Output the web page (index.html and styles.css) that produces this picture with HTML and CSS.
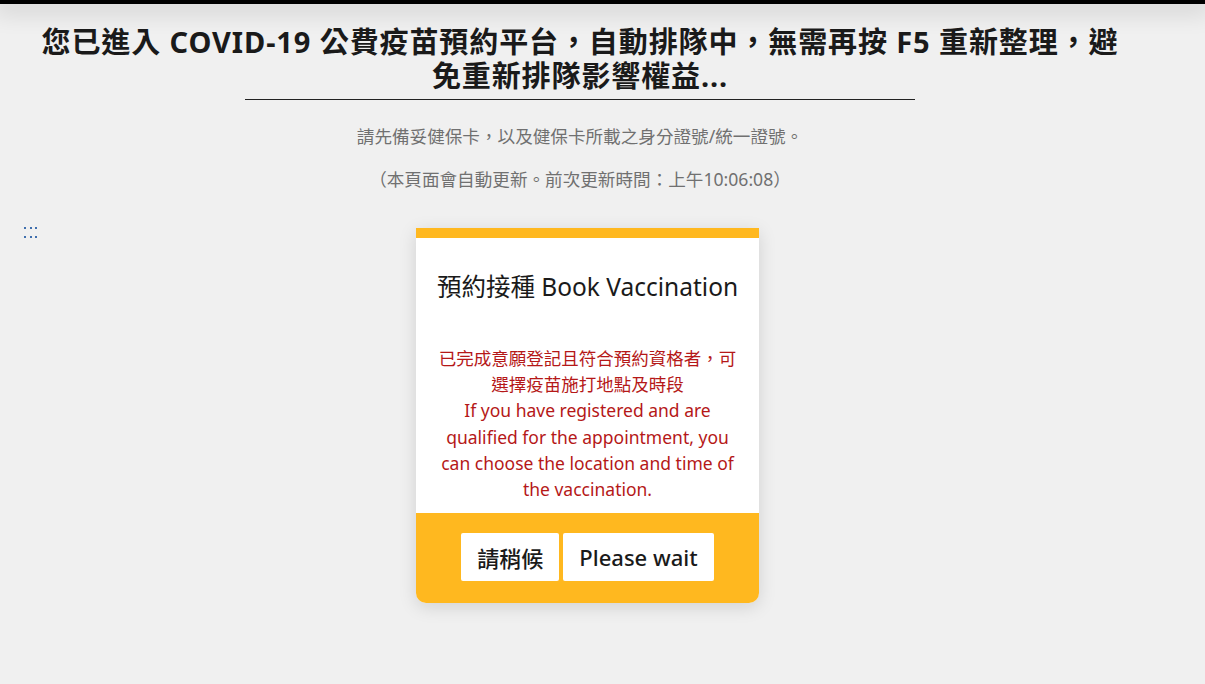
FILE: index.html
```html
<!DOCTYPE html>
<html lang="zh-Hant">
<head>
<meta charset="utf-8">
<title>COVID-19 公費疫苗預約平台</title>
<link rel="stylesheet" href="styles.css">
</head>
<body>
<div class="topbar"></div>
<main class="page">
  <header class="intro">
    <h1 class="headline">您已進入 COVID-19 公費疫苗預約平台，自動排隊中，無需再按 F5 重新整理，避<br>免重新排隊影響權益...</h1>
    <hr class="rule">
    <p class="note">請先備妥健保卡，以及健保卡所載之身分證號/統一證號。</p>
    <p class="note">（本頁面會自動更新。前次更新時間：上午10:06:08）</p>
  </header>
  <section class="stage">
    <div class="dots"><i></i><i></i><i></i><i></i><i></i><i></i></div>
    <div class="card">
      <div class="card-body">
        <h2 class="card-title">預約接種 Book Vaccination</h2>
        <p class="card-text">已完成意願登記且符合預約資格者，可選擇疫苗施打地點及時段<br>If you have registered and are qualified for the appointment, you can choose the location and time of the vaccination.</p>
      </div>
      <div class="card-foot">
        <button class="btn">請稍候</button>
        <button class="btn">Please wait</button>
      </div>
    </div>
  </section>
</main>
</body>
</html>
```
FILE: styles.css
```css
html, body {
  margin: 0;
  padding: 0;
}
body {
  background: #f0f0f0;
  font-family: "Noto Sans", "Noto Sans CJK TC", sans-serif;
  color: #212529;
  width: 1205px;
  height: 684px;
  overflow: hidden;
}
.topbar {
  height: 4px;
  background: #000;
  box-shadow: 0 2px 24px 6px rgba(0, 0, 0, 0.14);
}
.page {
  width: 1160px;
}
.intro {
  display: flex;
  flex-direction: column;
  align-items: center;
  text-align: center;
}
.headline {
  margin: 21px 0 0;
  font-size: 29px;
  line-height: 33.5px;
  letter-spacing: 0.9px;
  font-weight: 700;
  color: #1a1a1a;
  white-space: nowrap;
}
.rule {
  width: 670px;
  margin: 7px 0 0;
  border: 0;
  border-top: 1px solid #222;
  height: 0;
}
.note {
  margin: 0;
  font-size: 17.6px;
  line-height: 26px;
  color: #707070;
}
.rule + .note {
  margin-top: 23px;
}
.note + .note {
  margin-top: 17px;
}
.stage {
  position: relative;
  display: flex;
  justify-content: center;
  margin-top: 36px;
  padding-left: 15px;
}
.dots {
  position: absolute;
  left: 24px;
  top: -1px;
  display: grid;
  grid-template-columns: repeat(3, 2px);
  column-gap: 3.5px;
  row-gap: 7px;
}
.dots i {
  width: 2px;
  height: 2px;
  background: #3f6fae;
}
.card {
  width: 343px;
  border-top: 10px solid #ffb81f;
  background: #fff;
  border-radius: 0 0 10px 10px;
  box-shadow: 0 4px 18px rgba(0, 0, 0, 0.13);
  overflow: hidden;
}
.card-body {
  padding: 33px 20px 11px;
  text-align: center;
}
.card-title {
  margin: 0;
  font-size: 24.5px;
  line-height: 32px;
  font-weight: 400;
  color: #1a1a1a;
}
.card-text {
  margin: 42px 0 0;
  font-size: 17.5px;
  line-height: 26.2px;
  color: #b51818;
}
.card-foot {
  background: #ffb81f;
  display: flex;
  justify-content: center;
  gap: 4px;
  padding: 20px 0 22px;
}
.btn {
  height: 48px;
  padding: 0 16px;
  background: #fff;
  border: 0;
  border-radius: 2px;
  font-family: "Noto Sans", "Noto Sans CJK TC", sans-serif;
  font-size: 22px;
  font-weight: 500;
  color: #1a1a1a;
}
```
